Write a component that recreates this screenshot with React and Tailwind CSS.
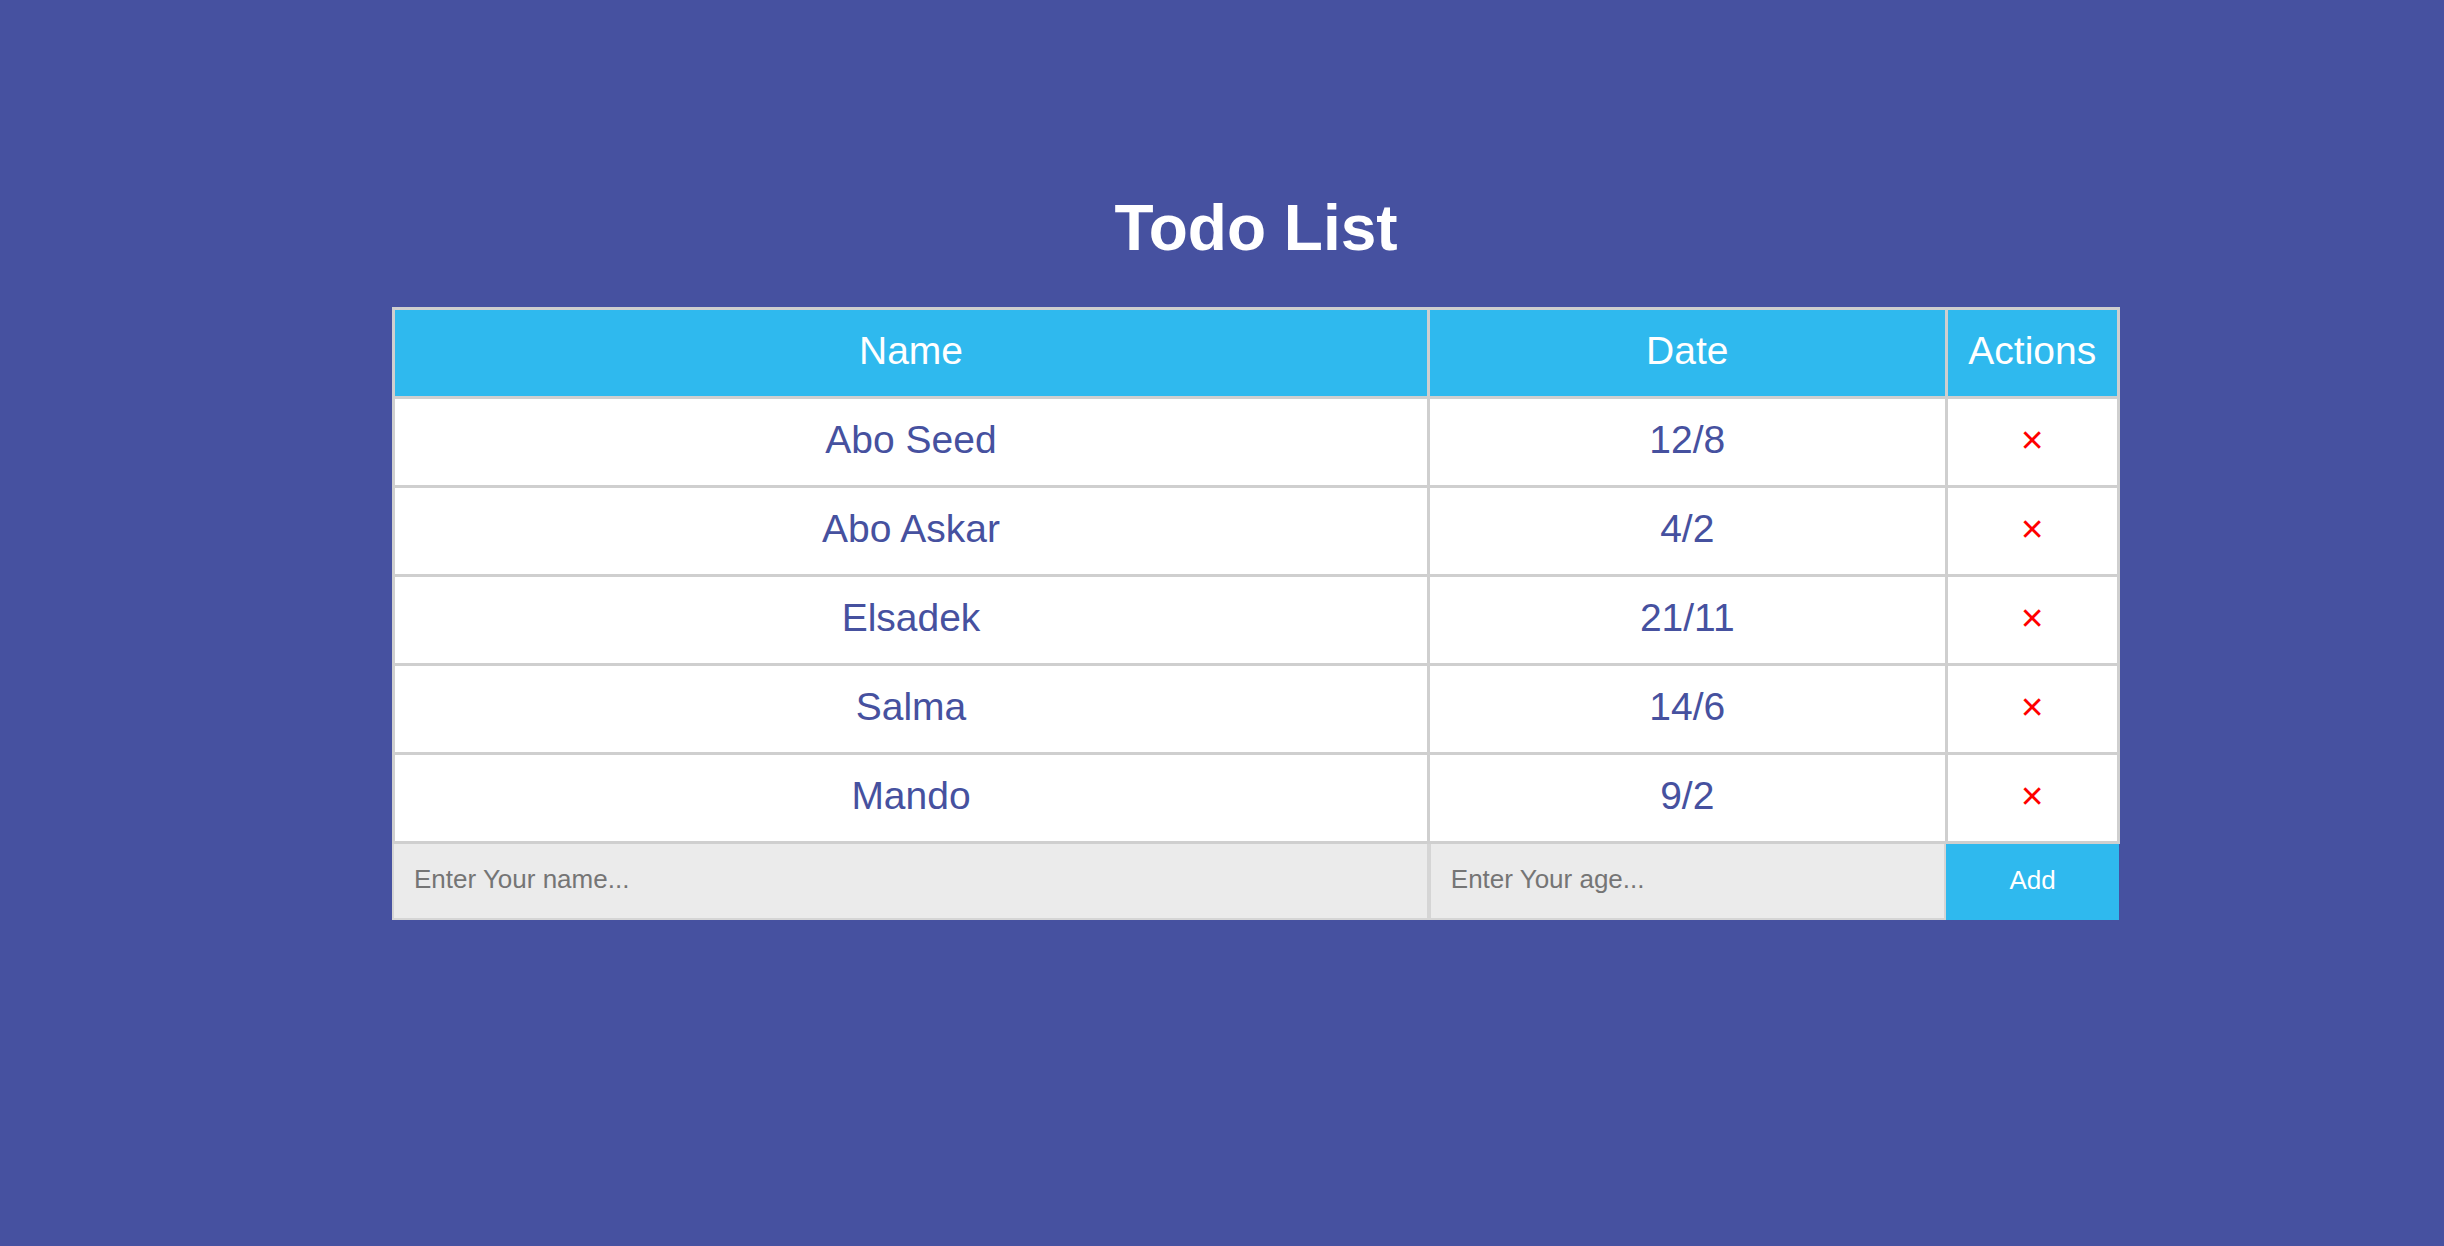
import { useState } from 'react';

const initialTodos = [
  { id: 1, name: 'Abo Seed', date: '12/8' },
  { id: 2, name: 'Abo Askar', date: '4/2' },
  { id: 3, name: 'Elsadek', date: '21/11' },
  { id: 4, name: 'Salma', date: '14/6' },
  { id: 5, name: 'Mando', date: '9/2' },
];

export default function App() {
  const [todos, setTodos] = useState(initialTodos);
  const [name, setName] = useState('');
  const [date, setDate] = useState('');

  const handleAdd = () => {
    if (!name.trim() || !date.trim()) return;
    setTodos([...todos, { id: Date.now(), name, date }]);
    setName('');
    setDate('');
  };

  const handleDelete = (id) => {
    setTodos(todos.filter((t) => t.id !== id));
  };

  return (
    <div className="min-h-screen bg-[#4651a0] font-['Liberation_Sans',Arial,sans-serif]">
      <div className="flex flex-col items-center pl-[68px] pt-[192px]">
        <h1 className="text-[64px] leading-[72px] font-bold text-white mb-[43px]">Todo List</h1>

        <div className="w-[1728px]">
          <table className="w-full table-fixed border-collapse text-[39px] text-center">
            <colgroup>
              <col className="w-[60%]" />
              <col className="w-[30%]" />
              <col className="w-[10%]" />
            </colgroup>
            <thead>
              <tr className="bg-[#2fb9ee] text-white">
                <th className="h-[89px] pb-[3px] border-[3px] border-[#cfcfcf] font-normal">Name</th>
                <th className="h-[89px] pb-[3px] border-[3px] border-[#cfcfcf] font-normal">Date</th>
                <th className="h-[89px] pb-[3px] border-[3px] border-[#cfcfcf] font-normal">Actions</th>
              </tr>
            </thead>
            <tbody>
              {todos.map((todo) => (
                <tr key={todo.id} className="bg-white text-[#46519f]">
                  <td className="h-[89px] pb-[3px] border-[3px] border-[#cfcfcf]">{todo.name}</td>
                  <td className="h-[89px] pb-[3px] border-[3px] border-[#cfcfcf]">{todo.date}</td>
                  <td className="h-[89px] pb-[3px] border-[3px] border-[#cfcfcf]">
                    <button
                      onClick={() => handleDelete(todo.id)}
                      className="text-[#ff0000] cursor-pointer"
                    >
                      ×
                    </button>
                  </td>
                </tr>
              ))}
            </tbody>
          </table>

          {/* add row */}
          <div className="flex h-[76px] text-[26px]">
            <input
              type="text"
              value={name}
              onChange={(e) => setName(e.target.value)}
              placeholder="Enter Your name..."
              className="w-[60%] bg-[#ebebeb] border-2 border-t-0 border-[#d5d5d5] px-5 pb-[3px] text-[#46519f] placeholder:text-[#757575] outline-none"
            />
            <input
              type="text"
              value={date}
              onChange={(e) => setDate(e.target.value)}
              placeholder="Enter Your age..."
              className="w-[30%] bg-[#ebebeb] border-2 border-t-0 border-l-[3px] border-[#d5d5d5] -ml-px px-5 pb-[3px] text-[#46519f] placeholder:text-[#757575] outline-none"
            />
            <button
              onClick={handleAdd}
              className="w-[10%] bg-[#2fb9ee] text-white pb-[4px] cursor-pointer"
            >
              Add
            </button>
          </div>
        </div>
      </div>
    </div>
  );
}
